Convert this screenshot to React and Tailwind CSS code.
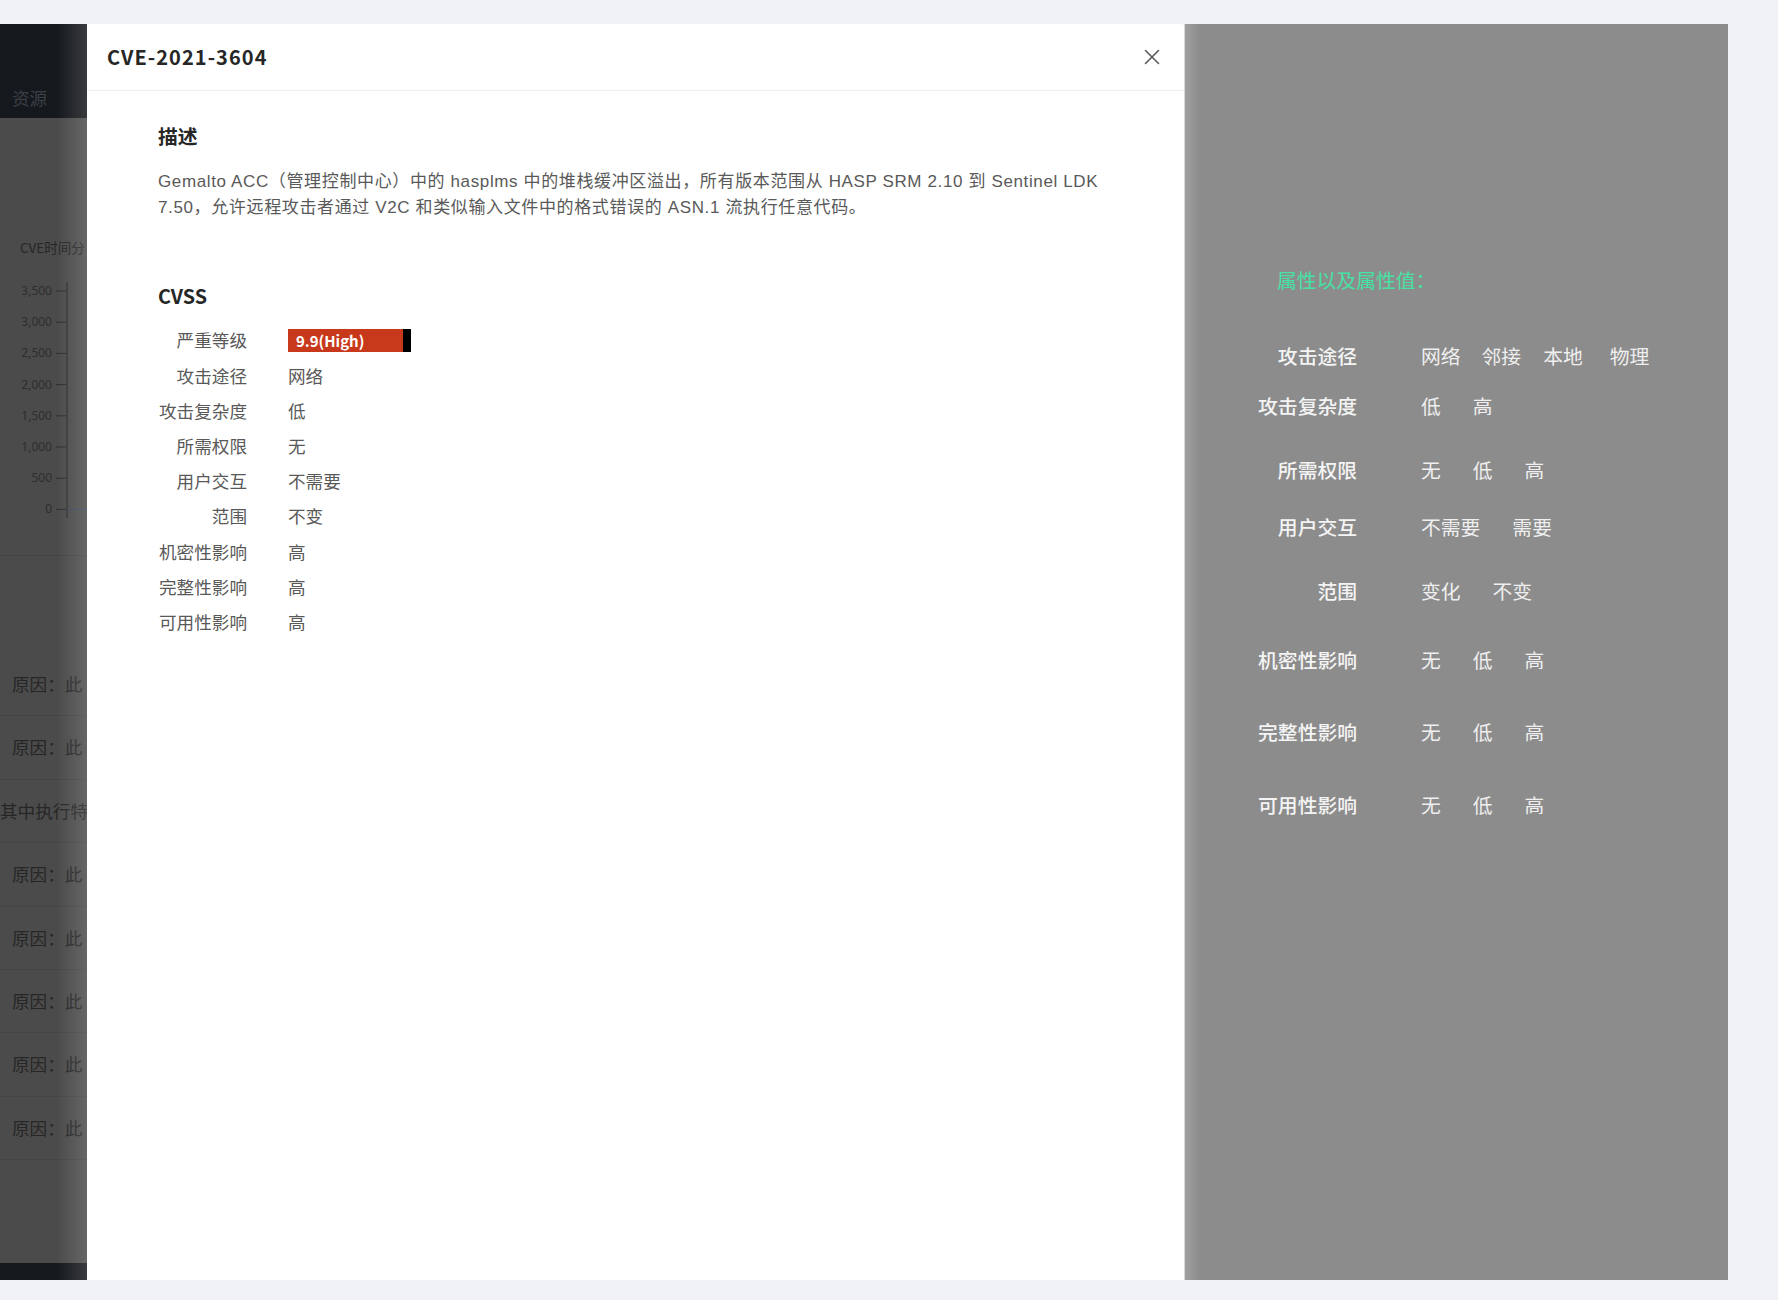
import React from "react";

const FONT = { fontFamily: '"Noto Sans CJK SC", "Noto Sans", sans-serif' };
const DESC = { fontFamily: '"Liberation Sans", "Noto Sans CJK SC", sans-serif' };

const cvssRows = [
  ["攻击途径", "网络"],
  ["攻击复杂度", "低"],
  ["所需权限", "无"],
  ["用户交互", "不需要"],
  ["范围", "不变"],
  ["机密性影响", "高"],
  ["完整性影响", "高"],
  ["可用性影响", "高"],
];

function LeftPage() {
  const ticks = ["3,500", "3,000", "2,500", "2,000", "1,500", "1,000", "500", "0"];
  const rows = ["原因：此", "原因：此", "其中执行特", "原因：此", "原因：此", "原因：此", "原因：此", "原因：此"];
  return (
    <div className="relative w-[87px] shrink-0 flex flex-col overflow-hidden">
      <div className="h-[94px] bg-[#15181c] pt-[62px] pl-[12px] text-[17.6px] leading-[24px] text-[#3b4046] whitespace-nowrap">
        资源
      </div>
      <div className="flex-1 bg-[#4b4b4b] flex flex-col">
        <div className="mt-[119px] pl-[20px] text-[13.5px] leading-[20px] text-[#262626] whitespace-nowrap overflow-hidden">
          CVE时间分
        </div>
        <svg width="87" height="262" className="mt-[13px] block" viewBox="0 0 87 262">
          {ticks.map((t, i) => {
            const y = 21 + i * 31.2;
            return (
              <g key={t}>
                <text x="52" y={y + 4} textAnchor="end" fontSize="12" fill="#2e2e2e" fontFamily="Noto Sans, sans-serif">
                  {t}
                </text>
                <line x1="56" y1={y} x2="66" y2={y} stroke="#2e2e2e" strokeWidth="1" />
              </g>
            );
          })}
          <line x1="67" y1="12" x2="67" y2="248" stroke="#2e2e2e" strokeWidth="1.2" />
          <line x1="67" y1="239.4" x2="87" y2="239.4" stroke="#3d4a5c" strokeWidth="1.2" />
        </svg>
        <div className="mt-[23px] border-t border-[#444444]"></div>
        <div className="mt-[97px] flex flex-col">
          {rows.map((r, i) => (
            <div
              key={i}
              className={`h-[63.4px] border-b border-[#454545] flex items-center whitespace-nowrap text-[17.6px] text-[#262626] ${
                r.startsWith("其") ? "pl-0" : "pl-[12px]"
              }`}
            >
              {r}
            </div>
          ))}
        </div>
        <div className="flex-1"></div>
        <div className="h-[17px] bg-[#15181c]"></div>
      </div>
      <div className="absolute right-0 top-0 bottom-0 w-[30px] bg-gradient-to-r from-transparent to-white/15 pointer-events-none"></div>
    </div>
  );
}

function Modal() {
  return (
    <div className="w-[1097px] shrink-0 bg-white flex flex-col rounded-tr-[3px]">
      <div className="h-[67px] border-b border-[#f0f0f0] flex items-center justify-between pl-[20px] pr-[24px]">
        <div className="text-[20px] font-semibold text-[#262626] tracking-[1.05px]">CVE-2021-3604</div>
        <svg width="16" height="16" viewBox="0 0 16 16">
          <path d="M1.5 1.5 L14.5 14.5 M14.5 1.5 L1.5 14.5" stroke="#595959" strokeWidth="1.6" strokeLinecap="round" />
        </svg>
      </div>
      <div className="pl-[71px] pt-[31px]">
        <div className="text-[19.8px] leading-[28px] font-semibold text-[#262626]">描述</div>
        <div className="mt-[19px] text-[17px] leading-[26px] text-[#595959] tracking-[0.63px]" style={DESC}>
          <div className="whitespace-nowrap">
            Gemalto ACC（管理控制中心）中的 hasplms 中的堆栈缓冲区溢出，所有版本范围从 HASP SRM 2.10 到 Sentinel LDK
          </div>
          <div className="whitespace-nowrap">7.50，允许远程攻击者通过 V2C 和类似输入文件中的格式错误的 ASN.1 流执行任意代码。</div>
        </div>
        <div className="mt-[61px] text-[19.8px] leading-[28px] font-semibold text-[#262626]">CVSS</div>
        <div className="mt-[13px] flex flex-col text-[17.6px] text-[#595959]">
          <div className="h-[35.2px] flex items-center">
            <div className="w-[89px] text-right whitespace-nowrap">严重等级</div>
            <div className="ml-[41px] flex h-[23px] w-[123px]">
              <div className="flex-1 bg-[#c8391b] text-white font-bold text-[15px] leading-[23px] pl-[8px] whitespace-nowrap">
                9.9(High)
              </div>
              <div className="w-[8px] bg-black"></div>
            </div>
          </div>
          {cvssRows.map(([k, v]) => (
            <div key={k} className="h-[35.2px] flex items-center">
              <div className="w-[89px] text-right whitespace-nowrap">{k}</div>
              <div className="ml-[41px] whitespace-nowrap">{v}</div>
            </div>
          ))}
        </div>
      </div>
    </div>
  );
}

const attrRows = [
  { label: "攻击途径", mt: "mt-[47px]", values: [["网络", "ml-0"], ["邻接", "ml-[21px]"], ["本地", "ml-[22px]"], ["物理", "ml-[27px]"]] },
  { label: "攻击复杂度", mt: "mt-[23px]", values: [["低", "ml-0"], ["高", "ml-[32px]"]] },
  { label: "所需权限", mt: "mt-[36px]", values: [["无", "ml-0"], ["低", "ml-[32px]"], ["高", "ml-[32px]"]] },
  { label: "用户交互", mt: "mt-[29px]", values: [["不需要", "ml-0"], ["需要", "ml-[32px]"]] },
  { label: "范围", mt: "mt-[36px]", values: [["变化", "ml-0"], ["不变", "ml-[32px]"]] },
  { label: "机密性影响", mt: "mt-[41px]", values: [["无", "ml-0"], ["低", "ml-[32px]"], ["高", "ml-[32px]"]] },
  { label: "完整性影响", mt: "mt-[44px]", values: [["无", "ml-0"], ["低", "ml-[32px]"], ["高", "ml-[32px]"]] },
  { label: "可用性影响", mt: "mt-[45px]", values: [["无", "ml-0"], ["低", "ml-[32px]"], ["高", "ml-[32px]"]] },
];

function AttrPanel() {
  return (
    <div className="w-[544px] shrink-0 bg-[linear-gradient(90deg,#a0a0a0,#8c8c8c_14px)] border-l border-[#d9d9d9] pt-[242px] flex flex-col">
      <div className="pl-[92px] text-[19.8px] leading-[28px] text-[#46e2a4] whitespace-nowrap">属性以及属性值：</div>
      {attrRows.map((r, idx) => (
        <div key={r.label} className={`${r.mt} ${idx === 0 ? "pt-[1px]" : ""} flex items-center h-[28px] text-[19.8px] leading-[28px]`}>
          <div className="w-[172px] text-right font-medium text-[#f4f4f4] whitespace-nowrap">{r.label}</div>
          <div className="ml-[64px] flex text-[#efefef]">
            {r.values.map(([v, m], i) => (
              <span key={i} className={`${m} whitespace-nowrap`}>
                {v}
              </span>
            ))}
          </div>
        </div>
      ))}
    </div>
  );
}

export default function App() {
  return (
    <div className="w-[1778px] h-[1300px] bg-[#f0f2f5] overflow-hidden pt-[24px]" style={FONT}>
      <div className="h-[1256px] flex">
        <LeftPage />
        <Modal />
        <AttrPanel />
      </div>
    </div>
  );
}
